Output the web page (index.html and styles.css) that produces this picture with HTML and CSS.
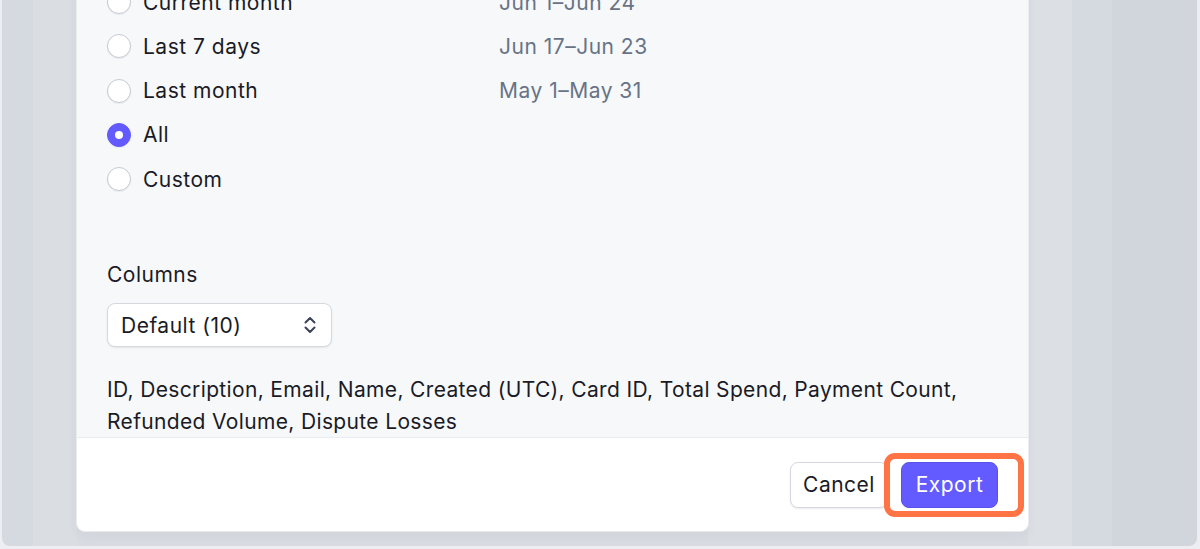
FILE: index.html
```html
<!DOCTYPE html>
<html lang="en">
<head>
<meta charset="utf-8">
<title>Export</title>
<link rel="stylesheet" href="styles.css">
</head>
<body>
<div class="frame">
  <div class="backdrop">
    <div class="modal">
      <div class="modal-body">
        <div class="ranges">
          <div class="range"><span class="radio"></span><span class="range-label">Current month</span><span class="range-date">Jun 1–Jun 24</span></div>
          <div class="range"><span class="radio"></span><span class="range-label">Last 7 days</span><span class="range-date">Jun 17–Jun 23</span></div>
          <div class="range"><span class="radio"></span><span class="range-label">Last month</span><span class="range-date">May 1–May 31</span></div>
          <div class="range"><span class="radio radio-on"></span><span class="range-label">All</span><span class="range-date"></span></div>
          <div class="range"><span class="radio"></span><span class="range-label">Custom</span><span class="range-date"></span></div>
        </div>
        <div class="columns">
          <div class="columns-title">Columns</div>
          <div class="select">
            <span>Default (10)</span>
            <svg class="chev" width="14" height="20" viewBox="0 0 14 20" fill="none" stroke="#3c4257" stroke-width="2" stroke-linecap="round" stroke-linejoin="round"><path d="M2.5 7.5 7 3l4.5 4.5"/><path d="M2.5 12.5 7 17l4.5-4.5"/></svg>
          </div>
          <p class="columns-list">ID, Description, Email, Name, Created (UTC), Card ID, Total Spend, Payment Count, Refunded Volume, Dispute Losses</p>
        </div>
      </div>
      <div class="modal-footer">
        <button class="btn btn-secondary">Cancel</button>
        <div class="export-wrap">
          <button class="btn btn-primary">Export</button>
          <span class="highlight"></span>
        </div>
      </div>
    </div>
  </div>
</div>
</body>
</html>
```
FILE: styles.css
```css
* { box-sizing: border-box; }
html, body { margin: 0; padding: 0; }
body {
  background: #eceef2;
  font-family: Inter, "Noto Sans", "Liberation Sans", sans-serif;
  color: #1a1b25;
  overflow: hidden;
  letter-spacing: 0.5px;
}
.frame {
  width: 1200px;
  height: 549px;
  padding: 0 3px 3px 2px;
}
.backdrop {
  height: 546px;
  border-radius: 0 0 8px 8px;
  overflow: hidden;
  padding-left: 75px;
  background:
    linear-gradient(90deg,
      #d5dae0 0, #d5dae0 31px,
      #dadee3 31px, #dadee3 75px,
      #d8dce2 75px, #d8dce2 1026px,
      #dce0e5 1026px, #dce0e5 1070px,
      #d5dae0 1070px, #d5dae0 1110px,
      #d1d6dd 1110px, #d1d6dd 100%);
}
.modal {
  width: 951px;
  margin-top: -20px;
  background: #ffffff;
  border-radius: 0 0 8px 8px;
  box-shadow: 0 0 0 1px rgba(255,255,255,0.5), 0 4px 12px rgba(60,66,87,0.06);
  overflow: hidden;
}
.modal-body {
  background: #f6f8fa;
  padding: 0 30px;
  border-bottom: 1px solid #e8ebef;
}
.ranges {
  display: flex;
  flex-direction: column;
}
.range {
  display: flex;
  align-items: center;
  height: 44.25px;
  font-size: 21px;
}
.radio {
  width: 24px;
  height: 24px;
  border-radius: 50%;
  background: #fff;
  border: 1px solid #c4cad3;
  box-shadow: 0 1px 1px rgba(0,0,0,0.06);
  flex: none;
  display: flex;
  align-items: center;
  justify-content: center;
}
.radio-on {
  background: #635bff;
  border-color: #635bff;
}
.radio-on::after {
  content: "";
  width: 8px;
  height: 8px;
  border-radius: 50%;
  background: #fff;
}
.range-label {
  margin-left: 12px;
  width: 356px;
}
.range-date {
  color: #687385;
}
.columns {
  padding-top: 60px;
}
.columns-title {
  font-size: 21px;
  line-height: 28px;
  height: 28px;
}
.select {
  margin-top: 14px;
  width: 225px;
  height: 44px;
  background: #fff;
  border-radius: 8px;
  border: 1px solid #d5d9df;
  box-shadow: 0 1px 2px rgba(0,0,0,0.08);
  display: flex;
  align-items: center;
  justify-content: space-between;
  padding: 0 14px 0 13px;
  font-size: 21px;
  color: #1a1b25;
}
.chev { display: block; }
.columns-list {
  margin: 27px 0 0 0;
  font-size: 21px;
  line-height: 31.5px;
  letter-spacing: 0.35px;
  padding-bottom: 0;
}
.modal-footer {
  height: 93px;
  display: flex;
  align-items: center;
  justify-content: flex-end;
  gap: 13px;
  padding-right: 30px;
}
.btn {
  font-family: inherit;
  letter-spacing: 0.5px;
  font-size: 21px;
  height: 46px;
  border-radius: 8px;
  padding: 0;
  cursor: pointer;
}
.btn-secondary {
  background: #fff;
  color: #1a1b25;
  border: 1px solid #d5d9df;
  box-shadow: 0 1px 2px rgba(0,0,0,0.08);
  width: 98px;
}
.btn-primary {
  background: #635bff;
  color: #fff;
  border: 1px solid #5851ea;
  width: 97px;
}
.export-wrap {
  position: relative;
  display: flex;
}
.highlight {
  position: absolute;
  left: -17px;
  top: -9px;
  width: 140px;
  height: 64px;
  border: 6px solid #ff7344;
  border-radius: 11px;
  pointer-events: none;
}
```
